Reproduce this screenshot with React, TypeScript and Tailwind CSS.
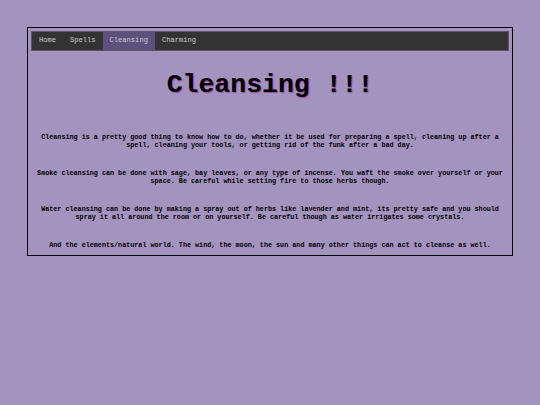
import React from "react";

export default function App() {
  const mono = { fontFamily: '"Liberation Mono", "Courier New", monospace' };
  const items = ["Home", "Spells", "Cleansing", "Charming"];
  return (
    <div className="min-h-[405px] bg-[#a294bf] pt-[27px] px-[27px]" style={mono}>
      <div className="w-[486px] border border-black p-[3px] pb-[5px]">
        <nav className="flex h-[20px] bg-[#333333] border border-[#5a5468]">
          {items.map((it) => (
            <span
              key={it}
              className={
                "flex items-center px-[7px] text-[7.1px] leading-none text-[#cccccc] " +
                (it === "Cleansing" ? "bg-[#5b517c]" : "")
              }
            >
              {it}
            </span>
          ))}
        </nav>
        <h1 className="mt-[18px] text-center text-[26.5px] leading-[32px] font-bold text-black [text-shadow:1px_1px_1px_rgba(160,48,160,0.8)]">
          Cleansing !!!
        </h1>
        <div className="mx-auto mt-[33px] flex w-[474px] flex-col gap-[21px] text-center text-[6.75px] leading-[7.5px] font-bold text-black">
          <p>
            Cleansing is a pretty good thing to know how to do, whether it be used for preparing a spell, cleaning up after a spell, cleaning your tools, or getting rid of the funk after a bad day.
          </p>
          <p>
            Smoke cleansing can be done with sage, bay leaves, or any type of incense. You waft the smoke over yourself or your space. Be careful while setting fire to those herbs though.
          </p>
          <p>
            Water cleansing can be done by making a spray out of herbs like lavender and mint, its pretty safe and you should spray it all around the room or on yourself. Be careful though as water irrigates some crystals.
          </p>
          <p>
            And the elements/natural world. The wind, the moon, the sun and many other things can act to cleanse as well.
          </p>
        </div>
      </div>
    </div>
  );
}
